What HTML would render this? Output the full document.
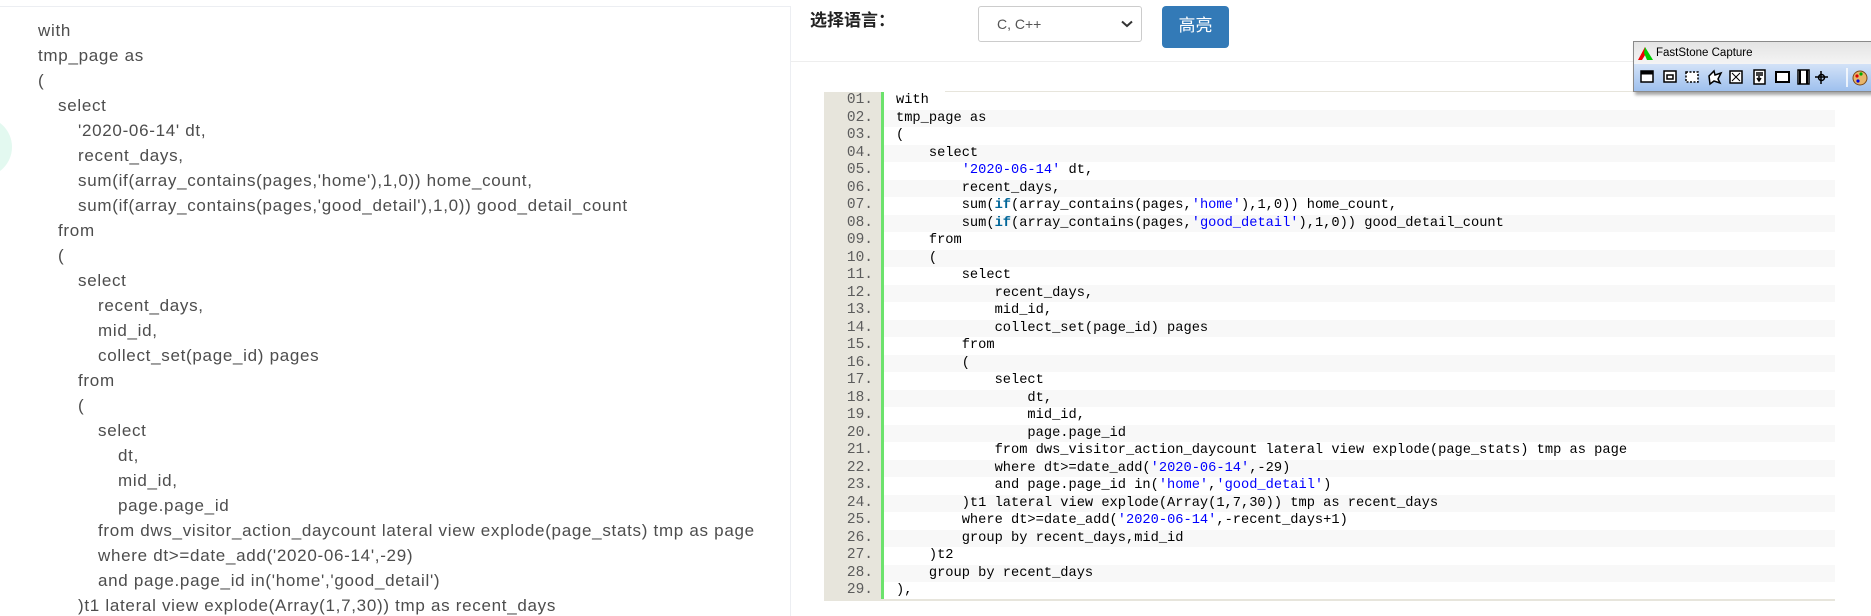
<!DOCTYPE html>
<html><head><meta charset="utf-8">
<style>
html,body{margin:0;padding:0;width:1871px;height:616px;overflow:hidden;background:#fff;position:relative}
.left{position:absolute;left:0;top:6px;width:790px;height:610px;border-top:1px solid #eceef2;border-right:1px solid #eceef2;background:#fff;overflow:hidden}
.lt{position:absolute;left:38px;top:11px;font-family:"Liberation Sans","Noto Sans CJK SC",sans-serif;font-size:17px;color:#4d4d4d;line-height:25px;white-space:pre;letter-spacing:0.7px}
.lt div{height:25px}
.l1{padding-left:20px}.l2{padding-left:40px}.l3{padding-left:60px}.l4{padding-left:80px}
.circ{position:absolute;left:-48px;top:110px;width:60px;height:60px;border-radius:50%;background:#e3f9f0}
.lab{position:absolute;left:810px;top:6px;font-family:"Liberation Sans","Noto Sans CJK SC",sans-serif;font-weight:bold;font-size:17px;color:#222}
.sel{position:absolute;left:978px;top:6px;width:164px;height:36px;border:1px solid #ccc;border-radius:3px;box-sizing:border-box;font-family:"Liberation Sans",sans-serif;font-size:14px;color:#555;line-height:34px;padding-left:18px}
.sel svg{position:absolute;right:8px;top:13px}
.btn{position:absolute;left:1162px;top:6px;width:67px;height:42px;background:#337ab7;border-radius:4px;color:#fff;font-family:"Liberation Sans","Noto Sans CJK SC",sans-serif;font-size:17px;text-align:center;line-height:40px}
.hline{position:absolute;left:791px;top:61px;width:1080px;height:1px;background:#eee}
.code{position:absolute;left:824px;top:92px;width:1011px;height:507px;background:#e7e5dc}
.topl{position:absolute;left:945px;top:91px;width:890px;height:1px;background:#e7e5dc}
.green{position:absolute;left:57px;top:0;width:3px;height:507px;background:#6ce26c}
.rows{position:absolute;left:60px;top:0;width:951px}
.r{height:17.5px;line-height:17.5px;white-space:pre;font-family:"Liberation Mono",monospace;font-size:13.7px;color:#000;padding-left:12px;background:#fff}
.r:nth-child(even){background:#f8f8f8}
.nums{position:absolute;left:0;top:0;width:49px;text-align:right}
.n{height:17.5px;line-height:17.5px;font-family:"Liberation Mono",monospace;font-size:14.5px;color:#5c5c5c}
.s{color:#0000ff}.k{color:#006699;font-weight:bold}
.bot{position:absolute;left:824px;top:599px;width:1011px;height:2px;background:#e7e5dc}
.fs{position:absolute;left:1633px;top:41px;width:240px;height:49px;border:1px solid #8a8a8a;box-shadow:2px 3px 3px rgba(0,0,0,.35)}
.fst{height:22px;background:linear-gradient(#e4e4e4,#f4f4f4);font-family:"Liberation Sans",sans-serif;font-size:11.5px;line-height:22px;padding-left:22px;position:relative;color:#000}
.fsb{height:27px;background:linear-gradient(#d3e2f7,#9ec0ee);position:relative}
</style></head><body>
<div class="left">
<div class="circ"></div>
<div class="lt"><div>with</div><div>tmp_page as</div><div>(</div><div class="l1">select</div><div class="l2">'2020-06-14' dt,</div><div class="l2">recent_days,</div><div class="l2">sum(if(array_contains(pages,'home'),1,0)) home_count,</div><div class="l2">sum(if(array_contains(pages,'good_detail'),1,0)) good_detail_count</div><div class="l1">from</div><div class="l1">(</div><div class="l2">select</div><div class="l3">recent_days,</div><div class="l3">mid_id,</div><div class="l3">collect_set(page_id) pages</div><div class="l2">from</div><div class="l2">(</div><div class="l3">select</div><div class="l4">dt,</div><div class="l4">mid_id,</div><div class="l4">page.page_id</div><div class="l3">from dws_visitor_action_daycount lateral view explode(page_stats) tmp as page</div><div class="l3">where dt&gt;=date_add('2020-06-14',-29)</div><div class="l3">and page.page_id in('home','good_detail')</div><div class="l2">)t1 lateral view explode(Array(1,7,30)) tmp as recent_days</div></div>
</div>
<div class="lab">选择语言：</div>
<div class="sel">C, C++<svg width="12" height="8" viewBox="0 0 12 8"><path d="M1 1.5 L6 6 L11 1.5" stroke="#333" stroke-width="2" fill="none"/></svg></div>
<div class="btn">高亮</div>
<div class="hline"></div>
<div class="topl"></div>
<div class="code">
<div class="nums">
<div class="n">01.</div><div class="n">02.</div><div class="n">03.</div><div class="n">04.</div><div class="n">05.</div><div class="n">06.</div><div class="n">07.</div><div class="n">08.</div><div class="n">09.</div><div class="n">10.</div><div class="n">11.</div><div class="n">12.</div><div class="n">13.</div><div class="n">14.</div><div class="n">15.</div><div class="n">16.</div><div class="n">17.</div><div class="n">18.</div><div class="n">19.</div><div class="n">20.</div><div class="n">21.</div><div class="n">22.</div><div class="n">23.</div><div class="n">24.</div><div class="n">25.</div><div class="n">26.</div><div class="n">27.</div><div class="n">28.</div><div class="n">29.</div>
</div>
<div class="green"></div>
<div class="rows">
<div class="r">with</div>
<div class="r">tmp_page as</div>
<div class="r">(</div>
<div class="r">    select</div>
<div class="r">        <span class="s">'2020-06-14'</span> dt,</div>
<div class="r">        recent_days,</div>
<div class="r">        sum(<span class="k">if</span>(array_contains(pages,<span class="s">'home'</span>),1,0)) home_count,</div>
<div class="r">        sum(<span class="k">if</span>(array_contains(pages,<span class="s">'good_detail'</span>),1,0)) good_detail_count</div>
<div class="r">    from</div>
<div class="r">    (</div>
<div class="r">        select</div>
<div class="r">            recent_days,</div>
<div class="r">            mid_id,</div>
<div class="r">            collect_set(page_id) pages</div>
<div class="r">        from</div>
<div class="r">        (</div>
<div class="r">            select</div>
<div class="r">                dt,</div>
<div class="r">                mid_id,</div>
<div class="r">                page.page_id</div>
<div class="r">            from dws_visitor_action_daycount lateral view explode(page_stats) tmp as page</div>
<div class="r">            where dt&gt;=date_add(<span class="s">'2020-06-14'</span>,-29)</div>
<div class="r">            and page.page_id in(<span class="s">'home'</span>,<span class="s">'good_detail'</span>)</div>
<div class="r">        )t1 lateral view explode(Array(1,7,30)) tmp as recent_days</div>
<div class="r">        where dt&gt;=date_add(<span class="s">'2020-06-14'</span>,-recent_days+1)</div>
<div class="r">        group by recent_days,mid_id</div>
<div class="r">    )t2</div>
<div class="r">    group by recent_days</div>
<div class="r">),</div>
</div>
</div>
<div class="bot"></div>
<div class="fs">
<div class="fst"><svg style="position:absolute;left:4px;top:4px" width="17" height="14" viewBox="0 0 17 14"><path d="M0 14 L7 1 L9 6 L4 14Z" fill="#e00"/><path d="M7 1 L15 14 L9 14 L6 7Z" fill="#0c0"/></svg>FastStone Capture</div>
<div class="fsb">
<svg width="240" height="27" viewBox="0 0 240 27">
<g fill="none" stroke="#000" stroke-width="1.5">
<rect x="7" y="7" width="12" height="11" fill="#fff"/><line x1="7" y1="9" x2="19" y2="9" stroke-width="3"/>
<rect x="30" y="7" width="12" height="11" fill="#fff"/><rect x="33" y="11" width="6" height="4"/>
<rect x="52" y="8" width="12" height="10" stroke-dasharray="2 1.5" fill="#fff"/>
<path d="M75 12 L80 7 L81 11 L87 9 L84 15 L86 19 L80 17 L76 20Z" fill="#fff"/>
<rect x="96" y="7" width="12" height="12" fill="#fff"/><path d="M98 9 L102 13 L106 9 M98 17 L102 13 L106 17" stroke-width="1"/>
<rect x="120" y="6" width="11" height="14" fill="#fff"/><path d="M122 9 H129 M122 11 H129 M125 12 V16 M123 14 L125 17 L127 14"/>
<rect x="142" y="8" width="13" height="10" fill="#fff" stroke-width="2"/>
<rect x="164" y="6" width="11" height="14" fill="#fff"/><path d="M166 6 V20 M173 6 V20" stroke-width="2"/>
<path d="M187 7 V20 M181 13 H194"/><circle cx="187.5" cy="13.5" r="3"/>
</g>
<line x1="213" y1="4" x2="213" y2="23" stroke="#fff" stroke-width="1.5"/>
<circle cx="226" cy="14" r="7" fill="#e8b56a" stroke="#7a4a1a"/><circle cx="223" cy="12" r="1.6" fill="#d00"/><circle cx="227" cy="10" r="1.6" fill="#0a0"/><circle cx="224" cy="17" r="1.6" fill="#00d"/>
</svg>
</div>
</div>
</body></html>
